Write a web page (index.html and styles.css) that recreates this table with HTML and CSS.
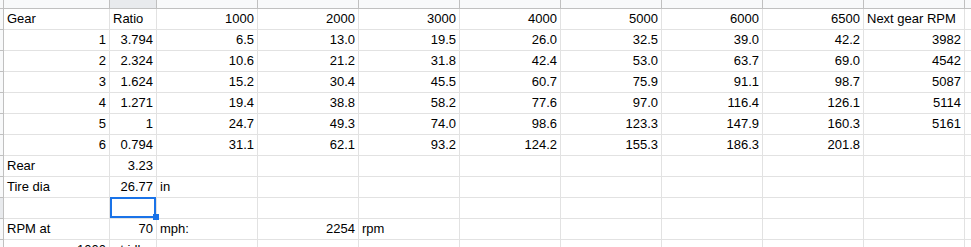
FILE: index.html
```html
<!DOCTYPE html>
<html>
<head>
<meta charset="utf-8">
<link rel="stylesheet" href="styles.css">
</head>
<body>
<div class="sheet">
  <div class="hd corner"></div><div class="hd"></div><div class="hd sel"></div><div class="hd"></div><div class="hd"></div><div class="hd"></div><div class="hd"></div><div class="hd"></div><div class="hd"></div><div class="hd"></div><div class="hd"></div><div class="hd"></div>

  <div class="rh"></div><div class="c">Gear</div><div class="c">Ratio</div><div class="c n">1000</div><div class="c n">2000</div><div class="c n">3000</div><div class="c n">4000</div><div class="c n">5000</div><div class="c n">6000</div><div class="c n">6500</div><div class="c">Next gear RPM</div><div class="c"></div>

  <div class="rh"></div><div class="c n">1</div><div class="c n">3.794</div><div class="c n">6.5</div><div class="c n">13.0</div><div class="c n">19.5</div><div class="c n">26.0</div><div class="c n">32.5</div><div class="c n">39.0</div><div class="c n">42.2</div><div class="c n">3982</div><div class="c"></div>

  <div class="rh"></div><div class="c n">2</div><div class="c n">2.324</div><div class="c n">10.6</div><div class="c n">21.2</div><div class="c n">31.8</div><div class="c n">42.4</div><div class="c n">53.0</div><div class="c n">63.7</div><div class="c n">69.0</div><div class="c n">4542</div><div class="c"></div>

  <div class="rh"></div><div class="c n">3</div><div class="c n">1.624</div><div class="c n">15.2</div><div class="c n">30.4</div><div class="c n">45.5</div><div class="c n">60.7</div><div class="c n">75.9</div><div class="c n">91.1</div><div class="c n">98.7</div><div class="c n">5087</div><div class="c"></div>

  <div class="rh"></div><div class="c n">4</div><div class="c n">1.271</div><div class="c n">19.4</div><div class="c n">38.8</div><div class="c n">58.2</div><div class="c n">77.6</div><div class="c n">97.0</div><div class="c n">116.4</div><div class="c n">126.1</div><div class="c n">5114</div><div class="c"></div>

  <div class="rh"></div><div class="c n">5</div><div class="c n">1</div><div class="c n">24.7</div><div class="c n">49.3</div><div class="c n">74.0</div><div class="c n">98.6</div><div class="c n">123.3</div><div class="c n">147.9</div><div class="c n">160.3</div><div class="c n">5161</div><div class="c"></div>

  <div class="rh"></div><div class="c n">6</div><div class="c n">0.794</div><div class="c n">31.1</div><div class="c n">62.1</div><div class="c n">93.2</div><div class="c n">124.2</div><div class="c n">155.3</div><div class="c n">186.3</div><div class="c n">201.8</div><div class="c"></div><div class="c"></div>

  <div class="rh"></div><div class="c">Rear</div><div class="c n">3.23</div><div class="c"></div><div class="c"></div><div class="c"></div><div class="c"></div><div class="c"></div><div class="c"></div><div class="c"></div><div class="c"></div><div class="c"></div>

  <div class="rh"></div><div class="c">Tire dia</div><div class="c n">26.77</div><div class="c">in</div><div class="c"></div><div class="c"></div><div class="c"></div><div class="c"></div><div class="c"></div><div class="c"></div><div class="c"></div><div class="c"></div>

  <div class="rh sel"></div><div class="c"></div><div class="c active"></div><div class="c"></div><div class="c"></div><div class="c"></div><div class="c"></div><div class="c"></div><div class="c"></div><div class="c"></div><div class="c"></div><div class="c"></div>

  <div class="rh"></div><div class="c">RPM at</div><div class="c n">70</div><div class="c">mph:</div><div class="c n">2254</div><div class="c">rpm</div><div class="c"></div><div class="c"></div><div class="c"></div><div class="c"></div><div class="c"></div><div class="c"></div>

  <div class="rh"></div><div class="c n">1000</div><div class="c">at idle</div><div class="c"></div><div class="c"></div><div class="c"></div><div class="c"></div><div class="c"></div><div class="c"></div><div class="c"></div><div class="c"></div><div class="c"></div>
</div>
</body>
</html>
```

FILE: styles.css
```css
html, body {
  margin: 0;
  padding: 0;
  background: #ffffff;
  overflow: hidden;
}

.sheet {
  display: grid;
  grid-template-columns: 4px 106px 47px repeat(8, 101px) 101px;
  grid-template-rows: 9px repeat(12, 21px);
  font-family: "Liberation Sans", Arial, sans-serif;
  font-size: 13px;
  color: #000000;
}

.hd {
  box-sizing: border-box;
  background: #f8f9fa;
  border-right: 1px solid #c0c0c0;
  border-bottom: 1px solid #c0c0c0;
}

.hd.sel {
  background: #e8eaed;
}

.rh {
  box-sizing: border-box;
  background: #f8f9fa;
  border-right: 1px solid #c0c0c0;
  border-bottom: 1px solid #c0c0c0;
}

.rh.sel {
  background: #e8eaed;
}

.c {
  box-sizing: border-box;
  border-right: 1px solid #e2e2e2;
  border-bottom: 1px solid #e2e2e2;
  padding: 0 3px 2px 3px;
  line-height: 16px;
  display: flex;
  align-items: flex-end;
  white-space: nowrap;
  overflow: visible;
}

.c.n {
  justify-content: flex-end;
}

.c.active {
  position: relative;
}

.c.active::after {
  content: "";
  position: absolute;
  top: -1px;
  left: 0;
  right: 0;
  bottom: 0;
  border: 2px solid #1a73e8;
}

.c.active::before {
  content: "";
  position: absolute;
  right: -3px;
  bottom: -2px;
  width: 6px;
  height: 6px;
  background: #1a73e8;
  z-index: 1;
}
```
